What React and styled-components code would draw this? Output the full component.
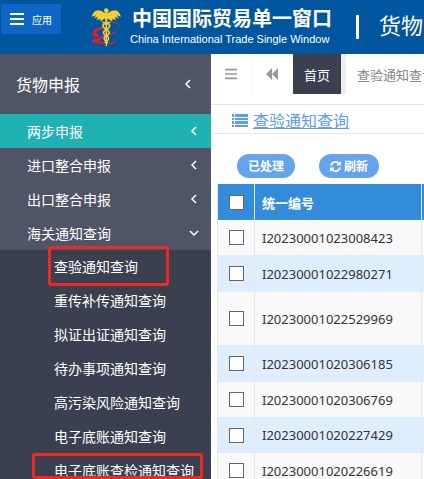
import React from 'react'
import styled, { createGlobalStyle } from 'styled-components'

const menuGroups = ['进口整合申报', '出口整合申报']

const noticeLinks = [
  { label: '查验通知查询', mark: 'full' },
  { label: '重传补传通知查询' },
  { label: '拟证出证通知查询' },
  { label: '待办事项通知查询' },
  { label: '高污染风险通知查询' },
  { label: '电子底账通知查询' },
  { label: '电子底账查检通知查询', mark: 'wide' },
]

const records = [
  { id: 'I20230001023008423', height: 35 },
  { id: 'I20230001022980271', height: 37 },
  { id: 'I20230001022529969', height: 53 },
  { id: 'I20230001020306185', height: 37 },
  { id: 'I20230001020306769', height: 35 },
  { id: 'I20230001020227429', height: 36 },
  { id: 'I20230001020226619', height: 35 },
]

const Emblem = () => (
  <svg width="32" height="40" viewBox="270 20 96 120" aria-hidden="true">
    <path
      d="M325 68 Q351 64 355 78 Q356 90 334 98 L306 107 Q284 116 286 126 Q292 132 313 131 L313 125 Q299 125 300 119 Q302 114 325 107 Q351 97 356 83 Q360 64 339 65 Z"
      fill="#dc1e28"
    />
    <path d="M312 78 Q283 82 277 97 Q273 107 289 111 L301 105 Q286 103 290 95 Q295 87 312 86 Z" fill="#dc1e28" />
    <path d="M325 127 Q344 126 353 117 Q344 132 325 134 Z M275 119 Q284 113 294 116 Q284 121 285 127 Q275 128 275 119 Z" fill="#dc1e28" />
    <path
      d="M315 39 Q300 27 288 31 Q280 34 275 49 L288 45 L282 54 L294 50 L290 59 L302 56 L301 64 L315 54 L319 68 L323 54 L337 64 L336 56 L348 59 L344 50 L356 54 L350 45 L363 49 Q358 34 350 31 Q338 27 323 39 Z"
      fill="#f7cf30"
    />
    <circle cx="319" cy="31" r="7" fill="#f7cf30" />
    <path d="M316 38 H322 L321 138 H317 Z" fill="#f7cf30" />
    <path
      d="M307 66 Q334 70 328 80 Q323 86 315 90 Q306 96 314 103 Q330 110 324 119 L314 128 M331 66 Q304 70 310 80 Q315 86 323 90 Q332 96 324 103 Q308 110 314 119 L324 128"
      fill="none"
      stroke="#f7cf30"
      strokeWidth="5"
    />
  </svg>
)

const Bars = ({ size }) => (
  <svg width={size} height={size} viewBox="0 0 14 14" fill="currentColor" aria-hidden="true">
    <path d="M0 1h14v2H0z M0 6h14v2H0z M0 11h14v2H0z" />
  </svg>
)

const Backward = () => (
  <svg width="12" height="12" viewBox="0 0 12 12" fill="currentColor" aria-hidden="true">
    <path d="M6 0v12L0 6z M12 0v12L6 6z" />
  </svg>
)

const ListIcon = () => (
  <svg width="16" height="14" viewBox="0 0 16 14" fill="currentColor" aria-hidden="true">
    <path d="M0 0h2v3H0z M3 0h13v3H3z M0 4h2v2H0z M3 4h13v2H3z M0 7h2v3H0z M3 7h13v3H3z M0 11h2v2H0z M3 11h13v2H3z" />
  </svg>
)

const Refresh = () => (
  <svg width="11" height="11" viewBox="0 128 1536 1536" fill="currentColor" aria-hidden="true">
    <path d="M1511 1056q0 5-1 7-64 268-268 434.500t-478 166.500q-146 0-282.500-55t-243.500-157l-129 129q-19 19-45 19t-45-19-19-45v-448q0-26 19-45t45-19h448q26 0 45 19t19 45-19 45l-137 137q71 66 161 102t187 36q134 0 250-65t186-179q11-17 53-117 8-23 30-23h192q13 0 22.500 9.500t9.500 22.500zM1536 256v448q0 26-19 45t-45 19h-448q-26 0-45-19t-19-45 19-45l138-138q-148-137-349-137-134 0-250 65t-186 179q-11 17-53 117-8 23-30 23h-199q-13 0-22.500-9.500t-9.500-22.500v-7q65-268 270-434.500t480-166.500q146 0 284 55.500t245 156.500l130-129q19-19 45-19t45 19 19 45z" />
  </svg>
)

const Angle = ({ open }) => (
  <svg width="10" height="10" viewBox="0 0 10 10" fill="none" stroke="currentColor" strokeWidth="1.5" aria-hidden="true">
    <path d={open ? 'M1 3l4 4 4-4' : 'M7 1L3 5l4 4'} />
  </svg>
)

const App = () => (
  <Page>
    <GlobalStyle />
    <Header>
      <AppsButton type="button">
        <Bars size={14} />
        应用
      </AppsButton>
      <Brand>
        <Emblem />
        <BrandText>
          <BrandName>中国国际贸易单一窗口</BrandName>
          <BrandSub>China International Trade Single Window</BrandSub>
        </BrandText>
      </Brand>
      <Divider />
      <SystemName>货物</SystemName>
    </Header>
    <Body>
      <Sidebar>
        <SidebarTitle type="button">
          货物申报
          <Angle />
        </SidebarTitle>
        <MenuItem type="button" $active>
          两步申报
          <Angle />
        </MenuItem>
        {menuGroups.map(label => (
          <MenuItem type="button" key={label}>
            {label}
            <Angle />
          </MenuItem>
        ))}
        <MenuItem type="button">
          海关通知查询
          <Angle open />
        </MenuItem>
        <SubMenu>
          {noticeLinks.map(({ label, mark }) => (
            <SubItem key={label}>
              <SubLink href="#notice">{label}</SubLink>
              {mark && <Mark $wide={mark === 'wide'} />}
            </SubItem>
          ))}
        </SubMenu>
      </Sidebar>
      <Main>
        <TabBar>
          <TabIcon type="button" aria-label="菜单">
            <Bars size={12} />
          </TabIcon>
          <TabIcon type="button" aria-label="向左">
            <Backward />
          </TabIcon>
          <Tab type="button" $active>
            首页
          </Tab>
          <Tab type="button">查验通知查询</Tab>
        </TabBar>
        <TitleBar>
          <ListIcon />
          <Title href="#title">查验通知查询</Title>
        </TitleBar>
        <Actions>
          <Action type="button">已处理</Action>
          <Action type="button">
            <Refresh />
            刷新
          </Action>
        </Actions>
        <Table>
          <thead>
            <HeadRow>
              <CheckCell as="th">
                <Check type="checkbox" aria-label="全选" />
              </CheckCell>
              <IdCell as="th">统一编号</IdCell>
              <th />
            </HeadRow>
          </thead>
          <tbody>
            {records.map(({ id, height }) => (
              <Row key={id} $height={height}>
                <CheckCell>
                  <Check type="checkbox" aria-label={id} />
                </CheckCell>
                <IdCell>{id}</IdCell>
                <td />
              </Row>
            ))}
          </tbody>
        </Table>
      </Main>
    </Body>
  </Page>
)

export default App

const GlobalStyle = createGlobalStyle`
  * {
    box-sizing: border-box;
  }
  body {
    margin: 0;
    overflow: hidden;
    font-family: 'Noto Sans', 'Noto Sans CJK SC', sans-serif;
    font-size: 14px;
    background: #fff;
  }
  button {
    border: 0;
    padding: 0;
    font: inherit;
    color: inherit;
    background: none;
    cursor: pointer;
  }
  svg {
    flex: none;
    display: block;
  }
`

const Page = styled.div`
  height: 100vh;
  display: flex;
  flex-direction: column;
  overflow: hidden;
`

const Header = styled.header`
  display: flex;
  align-items: flex-start;
  flex: none;
  height: 54px;
  color: #fff;
  background: #0156a0;
  white-space: nowrap;
`

const AppsButton = styled.button`
  && {
    display: flex;
    flex: none;
    align-items: center;
    gap: 8px;
    width: 60px;
    height: 30px;
    margin: 4px 0 0 1px;
    padding-left: 9px;
    border-radius: 3px;
    font-size: 10px;
    background: #0d66c5;
  }
`

const Brand = styled.div`
  display: flex;
  flex: none;
  gap: 8px;
  margin: 7px 0 0 29px;
`

const BrandText = styled.div`
  display: flex;
  flex-direction: column;
`

const BrandName = styled.strong`
  padding-left: 2px;
  font-size: 20px;
  line-height: 24px;
`

const BrandSub = styled.span`
  font-family: 'Liberation Sans', sans-serif;
  font-size: 11px;
  line-height: 16px;
`

const Divider = styled.span`
  flex: none;
  width: 3px;
  height: 24px;
  margin: 15px 20px 0 24px;
  background: #fff;
`

const SystemName = styled.span`
  flex: none;
  font-size: 22px;
  line-height: 50px;
`

const Body = styled.div`
  flex: 1;
  display: flex;
  min-height: 0;
`

const Sidebar = styled.nav`
  flex: none;
  width: 211px;
  color: #fff;
  background: #4f5467;
`

const MenuItem = styled.button`
  && {
    display: flex;
    align-items: center;
    justify-content: space-between;
    width: 100%;
    height: 34px;
    padding: 0 12px 0 27px;
    background: ${props => (props.$active ? '#20b2b2' : 'transparent')};
  }
`

const SidebarTitle = styled(MenuItem)`
  && {
    height: 60px;
    padding: 0 18px 0 16px;
    font-size: 16px;
  }
`

const SubMenu = styled.ul`
  margin: 0;
  padding: 0;
  list-style: none;
  background: #3b4050;
`

const SubItem = styled.li`
  position: relative;
  height: 34px;
  padding-left: 54px;
  line-height: 34px;
`

const SubLink = styled.a`
  color: #fff;
  text-decoration: none;
  white-space: nowrap;
`

const Mark = styled.span`
  position: absolute;
  top: ${props => (props.$wide ? '-1px' : '-4px')};
  left: ${props => (props.$wide ? '32px' : '48px')};
  width: ${props => (props.$wide ? '171px' : '121px')};
  height: ${props => (props.$wide ? '26px' : '40px')};
  border: 3px solid #ee2922;
  border-radius: 3px;
`

const Main = styled.main`
  flex: 1;
  min-width: 0;
  overflow: hidden;
  color: #333;
`

const TabBar = styled.div`
  display: flex;
  height: 40px;
  overflow: hidden;
`

const TabIcon = styled.button`
  && {
    display: flex;
    flex: none;
    align-items: center;
    justify-content: center;
    width: 41px;
    color: #999;
    border-right: 1px solid #f5f5f5;
  }
`

const Tab = styled.button`
  && {
    flex: none;
    padding: 0 11px;
    font-size: 13px;
    white-space: nowrap;
    color: ${props => (props.$active ? '#fff' : '#888')};
    background: ${props => (props.$active ? '#3b4050' : '#fff')};
    border-right: ${props => (props.$active ? '0' : '1px solid #eee')};
    border-left: ${props => (props.$active ? '0' : '5px solid #eee')};
  }
`

const TitleBar = styled.div`
  display: flex;
  align-items: center;
  gap: 5px;
  height: 30px;
  margin-top: 10px;
  padding: 4px 0 0 21px;
  color: #5c9ded;
  border-top: 1px solid #e1e4e8;
  border-bottom: 1px solid #e1e4e8;
`

const Title = styled.a`
  color: inherit;
  font-size: 16px;
  line-height: 24px;
`

const Actions = styled.div`
  display: flex;
  gap: 24px;
  padding: 20px 0 6px 26px;
`

const Action = styled.button`
  && {
    display: flex;
    align-items: center;
    gap: 3px;
    height: 24px;
    padding: 0 11px;
    border-radius: 12px;
    font-size: 12px;
    font-weight: bold;
    color: #fff;
    background: #65a3eb;
  }
`

const Table = styled.table`
  width: calc(100% - 6px);
  margin-left: 6px;
  table-layout: fixed;
  border-spacing: 0;

  th,
  td {
    padding: 0;
    border-left: 1px solid #e4e8ec;
  }
`

const HeadRow = styled.tr`
  height: 36px;
  color: #fff;
  background: #338cd9;
`

const Row = styled.tr`
  height: ${props => props.$height}px;
  background: #f9f9f9;

  &:nth-child(even) {
    background: #dfeefe;
  }
`

const CheckCell = styled.td`
  width: 37px;
  text-align: center;
  vertical-align: middle;
`

const IdCell = styled.td`
  width: 167px;
  &&& {
    padding-left: 7px;
  }
  font-size: 13px;
  text-align: left;
`

const Check = styled.input`
  appearance: none;
  display: block;
  width: 15px;
  height: 15px;
  margin: 0 auto;
  border: 1px solid #666;
  background: #fff;
`
